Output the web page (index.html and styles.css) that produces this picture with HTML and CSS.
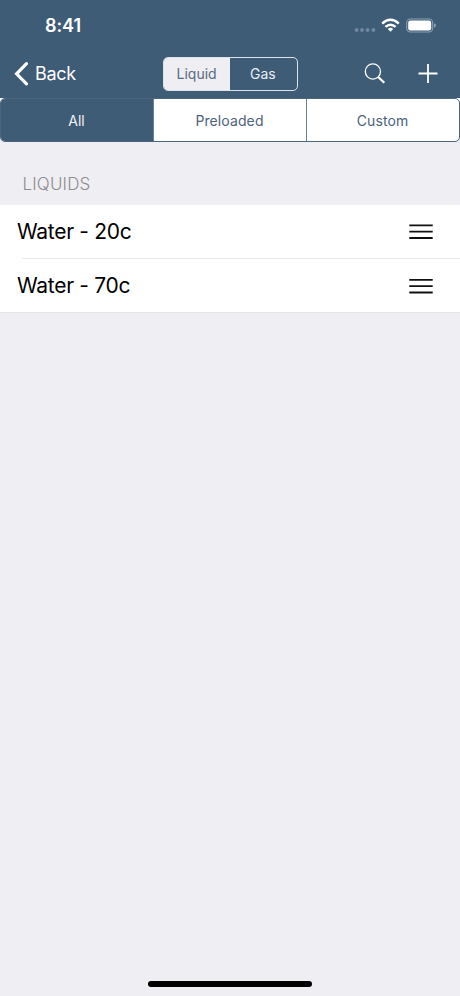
FILE: index.html
```html
<!DOCTYPE html>
<html lang="en">
<head>
<meta charset="utf-8">
<title>Liquids</title>
<link rel="stylesheet" href="styles.css">
</head>
<body>
<header class="top">
  <div class="status">
    <span class="time">8:41</span>
    <svg class="indicators" width="82" height="18" viewBox="0 0 82 18">
      <g fill="#7088a0"><circle cx="2.6" cy="14" r="1.9"/><circle cx="8" cy="14" r="1.9"/><circle cx="13.6" cy="14" r="1.9"/><circle cx="19.4" cy="14" r="1.9"/></g>
      <g fill="none" stroke="#fff" stroke-width="2.5"><path d="M28.2 7.6Q36.5 0 44.8 7.6"/><path d="M31.4 10.9Q36.5 6.5 41.6 10.9"/></g>
      <path d="M33.8 12.9Q36.5 10.7 39.2 12.9L36.5 15.7Z" fill="#fff"/>
      <rect x="52.7" y="3" width="26" height="13" rx="3.7" fill="none" stroke="#8da0b1" stroke-width="1.1"/>
      <rect x="54.2" y="4.5" width="23" height="10" rx="2.2" fill="#fff"/>
      <path d="M80 7.3Q82 7.9 82 9.5T80 11.7Z" fill="#8da0b1"/>
    </svg>
  </div>
  <nav class="nav">
    <a class="back">
      <svg width="16" height="26" viewBox="0 0 16 26"><path d="M12.5 2.7 2.6 12.8l9.9 10.1" fill="none" stroke="#fff" stroke-width="3.2" stroke-linecap="round"/></svg>
      <span>Back</span>
    </a>
    <div class="switch"><span class="on">Liquid</span><span>Gas</span></div>
    <div class="actions">
      <svg width="22" height="22" viewBox="0 0 22 22" fill="none" stroke="#fff"><circle cx="8.9" cy="8.5" r="7.6" stroke-width="1.3"/><path d="m14.2 14 6.1 5.8" stroke-width="2.2"/></svg>
      <svg width="20" height="20" viewBox="0 0 20 20"><path d="M10 0v19M.5 9.5h19" stroke="#fff" stroke-width="1.8"/></svg>
    </div>
  </nav>
</header>
<div class="tabs-bg"><div class="tabs"><span class="on">All</span><span>Preloaded</span><span>Custom</span></div></div>
<main>
  <h2>LIQUIDS</h2>
  <ul>
    <li><span>Water - 20c</span><svg width="24" height="16" viewBox="0 0 24 16"><path d="M.3 1.3h23.4M.3 7.7h23.4M.3 14h23.4" stroke="#111" stroke-width="1.8"/></svg></li>
    <li><span>Water - 70c</span><svg width="24" height="16" viewBox="0 0 24 16"><path d="M.3 1.8h23.4M.3 8.2h23.4M.3 14.5h23.4" stroke="#111" stroke-width="1.8"/></svg></li>
  </ul>
</main>
<footer><div class="home"></div></footer>
</body>
</html>
```
FILE: styles.css
```css
* { box-sizing: border-box; }
body {
  margin: 0;
  height: 996px;
  display: flex;
  flex-direction: column;
  background: #efeef3;
  font-family: Inter, "Liberation Sans", sans-serif;
  color: #000;
}
.top { height: 98px; background: #3f5c76; color: #fff; }
.status {
  height: 50px;
  padding: 1px 24px 0 45px;
  display: flex;
  align-items: center;
  justify-content: space-between;
}
.time { font-size: 18px; font-weight: 600; letter-spacing: -0.1px; }
.indicators { margin-top: -2px; }
.nav {
  height: 48px;
  padding: 0 22px 0 14px;
  display: grid;
  grid-template-columns: 149px 134.5px 1fr;
  align-items: center;
}
.back { display: flex; align-items: center; gap: 5px; font-size: 18px; letter-spacing: -0.3px; }
.back span { padding-bottom: 1px; }
.switch {
  height: 34px;
  display: grid;
  grid-template-columns: 1fr 1fr;
  border: 1px solid #dbe4ed;
  border-radius: 5px;
  overflow: hidden;
  font-size: 14px;
  color: #e6eef6;
}
.switch span { display: flex; align-items: center; justify-content: center; padding: 0 1px 1px 0; }
.switch .on { background: #efeef3; color: #596b80; }
.actions { display: flex; align-items: center; justify-content: flex-end; gap: 32px; }
.tabs-bg { height: 44px; background: linear-gradient(#fff 50%, #efeef3 50%); }
.tabs {
  height: 44px;
  display: grid;
  grid-template-columns: 152px 153px 1fr;
  border: 1px solid #4c657e;
  border-radius: 5px;
  overflow: hidden;
  background: #fff;
  color: #4d627c;
  font-size: 14px;
  letter-spacing: 0.1px;
}
.tabs span { display: flex; align-items: center; justify-content: center; padding-right: 1px; }
.tabs span + span { border-left: 1px solid #6c8196; }
.tabs .on { background: #3f5c76; color: #edf3f8; }
main { flex: 1; }
h2 {
  margin: 0;
  height: 63px;
  padding: 31px 0 0 22.5px;
  font-size: 17px;
  line-height: 22px;
  font-weight: 300;
  letter-spacing: 0.15px;
  color: #8c8c91;
}
ul { margin: 0; padding: 0; list-style: none; background: #fff; border-bottom: 1px solid #e4e3e8; }
li {
  height: 54px;
  padding: 0 27px 0 17px;
  display: flex;
  align-items: center;
  justify-content: space-between;
  font-size: 21px;
  letter-spacing: -0.3px;
}
li span { padding-bottom: 1px; }
li:first-child { background: linear-gradient(#ebebed, #ebebed) 22px 100% / 100% 1px no-repeat; }
li:last-child { height: 53px; }
footer { height: 15px; display: flex; justify-content: center; }
.home { width: 164px; height: 6px; border-radius: 3px; background: #000; }
```
